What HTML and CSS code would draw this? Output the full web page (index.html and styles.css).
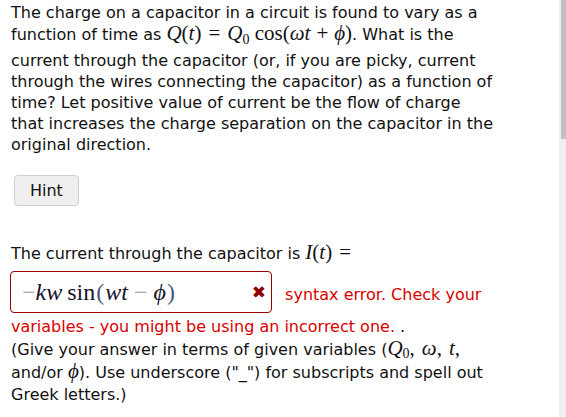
FILE: index.html
```html
<!DOCTYPE html>
<html lang="en">
<head>
  <meta charset="UTF-8" />
  <title>Capacitor current</title>
  <link rel="stylesheet" href="styles.css">
</head>
<body>

  <div class="problem">
    <p class="question">
      The charge on a capacitor in a circuit is found to vary as a function of time as
      <span class="math"><i>Q</i>(<i>t</i>)<span class="rel">=</span><i>Q</i><sub>0</sub> cos(<i>ωt</i><span class="bin">+</span><i>ϕ</i>)</span>.
      What is the current through the capacitor (or, if you are picky, current through the wires connecting
      the capacitor) as a function of time? Let positive value of current be the flow of charge that
      increases the charge separation on the capacitor in the original direction.
    </p>

    <div class="hint-row">
      <button class="btn">Hint</button>
    </div>

    <div class="answer">
      <div class="prompt">The current through the capacitor is <span class="math"><i>I</i>(<i>t</i>)<span class="rel">=</span></span></div>
      <div class="response">
        <span class="entry">
          <span class="mq"><span class="op">−</span><i>kw</i><span class="fn">sin</span><span class="paren">(</span><i>wt</i><span class="op bin">−</span><i>ϕ</i><span class="paren">)</span></span>
          <span class="mark">✖</span>
        </span>
        <span class="error">syntax error. Check your variables - you might be using an incorrect one.</span> .
      </div>
      <div class="note">
        (Give your answer in terms of given variables (<span class="math"><i>Q</i><sub>0</sub><span class="sep">,</span><i>ω</i><span class="sep">,</span><i>t</i><span class="sep">,</span></span>
        and/or <span class="math"><i>ϕ</i></span>). Use underscore ("_") for subscripts and spell out Greek letters.)
      </div>
    </div>
  </div>

  <div class="scrollbar"><div class="thumb"></div></div>

</body>
</html>
```

FILE: styles.css
```css
body {
  margin: 0;
  font-family: 'DejaVu Sans', sans-serif;
  font-size: 16px;
  color: #111;
  background: #fff;
}
.scrollbar {
  position: fixed;
  top: 0;
  right: 0;
  width: 7px;
  height: 100%;
  background: #f0f0f0;
}
.thumb {
  margin-left: 2px;
  height: 139px;
  background: #c1c1c1;
}
.problem {
  width: 484px;
  padding: 2px 11px 0;
}
.question {
  margin: 0;
  line-height: 21px;
}
.math {
  font-family: 'Liberation Serif', 'DejaVu Serif', serif;
  font-size: 21px;
  line-height: 21px;
  white-space: nowrap;
}
.math sub {
  font-size: 14px;
  line-height: 0;
  vertical-align: -3px;
}
.question .math sub {
  line-height: 20px;
  vertical-align: -4px;
}
.rel {
  margin: 0 7px;
}
.bin {
  margin: 0 6px;
}
.sep {
  margin-right: 7px;
}
.fn {
  margin-left: 5px;
}
.hint-row {
  margin-top: 20px;
  margin-left: 3px;
}
.btn {
  height: 31px;
  padding: 0 15px;
  font-family: inherit;
  font-size: 16px;
  color: #111;
  background: #efefef;
  border: 1px solid #cfcfcf;
  border-radius: 4px;
}
.answer {
  margin-top: 36px;
}
.prompt {
  line-height: 24px;
}
.response {
  line-height: 21px;
  margin-top: 5px;
}
.entry {
  display: inline-flex;
  align-items: center;
  justify-content: space-between;
  box-sizing: border-box;
  width: 262px;
  height: 42px;
  margin: 0 8px 3px -1px;
  padding: 0 5px 0 11px;
  border: 1px solid #9a0000;
  border-radius: 4px;
}
.mq {
  font-family: 'Liberation Serif', 'DejaVu Serif', serif;
  font-size: 24px;
  color: #14142a;
}
.mq .op {
  color: #9a9a9a;
}
.mq .paren {
  margin: 0 1px;
  color: #4a5a7a;
}
.mark {
  font-size: 17px;
  color: #8e0000;
}
.error {
  color: #d90000;
}
.note {
  margin-top: 1px;
  line-height: 22px;
}
```
